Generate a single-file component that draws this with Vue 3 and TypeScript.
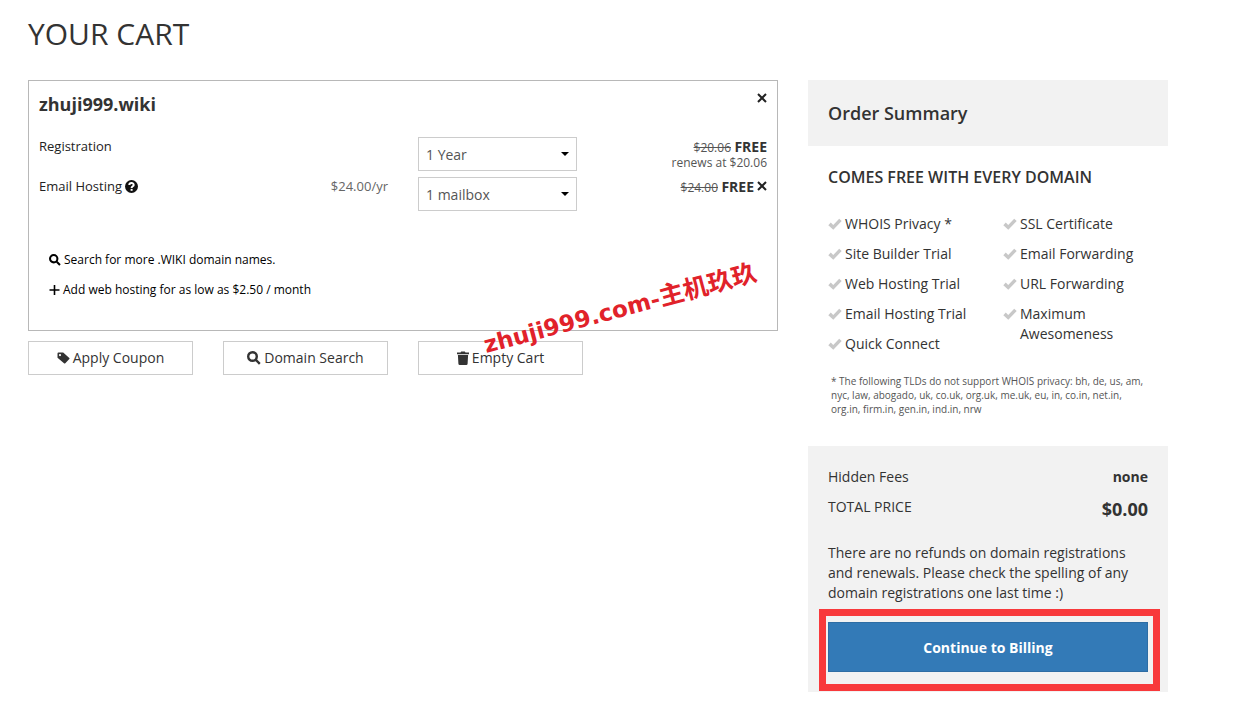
<script setup lang="ts">
import { ref } from 'vue'

const term = ref('1 Year')
const mailboxes = ref('1 mailbox')

const perks: string[][] = [
  ['WHOIS Privacy *', 'Site Builder Trial', 'Web Hosting Trial', 'Email Hosting Trial', 'Quick Connect'],
  ['SSL Certificate', 'Email Forwarding', 'URL Forwarding', 'Maximum Awesomeness'],
]
</script>

<template>
  <main class="page">
    <h1 class="title">YOUR CART</h1>
    <div class="columns">
      <section class="cart">
        <article class="card">
          <header class="card-head">
            <h2 class="domain">zhuji999.wiki</h2>
            <button class="remove" type="button" aria-label="Remove domain">
              <svg class="cross" viewBox="0 0 10 10"><path d="M1 1L9 9M9 1L1 9" /></svg>
            </button>
          </header>

          <div class="row">
            <label class="name" for="term">Registration</label>
            <span class="select-wrap">
              <select id="term" v-model="term" class="select">
                <option>1 Year</option>
                <option>2 Years</option>
              </select>
              <svg class="caret" viewBox="0 0 8 4"><path d="M0 0H8L4 4Z" /></svg>
            </span>
            <div class="price">
              <div><s>$20.06</s> <strong>FREE</strong></div>
              <div class="renew">renews at $20.06</div>
            </div>
          </div>

          <div class="row">
            <div class="name-line">
              <label class="name" for="mailboxes">Email Hosting
                <svg class="help" viewBox="0 0 13 13">
                  <circle cx="6.500" cy="6.500" r="6.500" />
                  <path class="hook" d="M4.300 5.100C4.300 2.500 8.700 2.400 8.700 4.900C8.700 6.300 6.600 6.200 6.600 7.900" />
                  <rect x="5.600" y="8.900" width="2" height="1.900" />
                </svg>
              </label>
              <span class="rate">$24.00/yr</span>
            </div>
            <span class="select-wrap">
              <select id="mailboxes" v-model="mailboxes" class="select">
                <option>1 mailbox</option>
                <option>2 mailboxes</option>
              </select>
              <svg class="caret" viewBox="0 0 8 4"><path d="M0 0H8L4 4Z" /></svg>
            </span>
            <div class="price inline">
              <span><s>$24.00</s> <strong>FREE</strong></span>
              <button class="remove" type="button" aria-label="Remove email hosting">
                <svg class="cross" viewBox="0 0 10 10"><path d="M1 1L9 9M9 1L1 9" /></svg>
              </button>
            </div>
          </div>

          <nav class="extras">
            <a class="extra" href="#search">
              <svg class="icon-sm" viewBox="0 0 14 14"><circle class="lens" cx="5.500" cy="5.500" r="4.300" /><path class="lens" d="M9 9L12.800 12.800" /></svg>
              Search for more .WIKI domain names.
            </a>
            <a class="extra" href="#hosting">
              <svg class="icon-plus" viewBox="0 0 10 10"><path d="M5 0V10M0 5H10" /></svg>
              Add web hosting for as low as $2.50 / month
            </a>
          </nav>
          <div class="stamp" aria-hidden="true">zhuji999.com-<span class="stamp-cjk">主机玖玖</span></div>
        </article>

        <div class="actions">
          <button class="action" type="button">
            <svg class="icon-tag" viewBox="0 0 13 12"><path fill-rule="evenodd" d="M0.500 1.500Q0.500 0.500 1.500 0.500H6.200L12.300 5.900Q12.900 6.500 12.300 7.100L8.300 11.300Q7.600 11.900 7 11.300L0.500 5.800ZM3 2A1.100 1.100 0 1 0 3 4.200A1.100 1.100 0 1 0 3 2Z" /></svg>
            Apply Coupon
          </button>
          <button class="action" type="button">
            <svg class="icon-md" viewBox="0 0 14 14"><circle class="lens" cx="5.500" cy="5.500" r="4.300" /><path class="lens" d="M9 9L12.800 12.800" /></svg>
            Domain Search
          </button>
          <button class="action" type="button">
            <svg class="icon-trash" viewBox="0 0 12 14"><path d="M0 1.500H3.500L4.200 0.500H7.800L8.500 1.500H12V3.200H0ZM0.900 4H11.100L10.600 12.800Q10.500 14 9.300 14H2.700Q1.500 14 1.400 12.800Z" /></svg>
            Empty Cart
          </button>
        </div>
      </section>

      <aside class="summary">
        <h2 class="summary-title">Order Summary</h2>
        <section class="free">
          <h3 class="free-title">COMES FREE WITH EVERY DOMAIN</h3>
          <div class="perks">
            <ul v-for="(column, i) in perks" :key="i" class="perk-list">
              <li v-for="perk in column" :key="perk" class="perk">
                <svg class="check" viewBox="0 0 14 12"><path d="M0.300 7.200L2.800 4.600L5.200 7L11.200 0.700L13.700 3.100L5.300 11.700Z" /></svg>
                <span>{{ perk }}</span>
              </li>
            </ul>
          </div>
          <p class="note">* The following TLDs do not support WHOIS privacy: bh, de, us, am, nyc, law, abogado, uk, co.uk, org.uk, me.uk, eu, in, co.in, net.in, org.in, firm.in, gen.in, ind.in, nrw</p>
        </section>
        <section class="totals">
          <div class="total"><span>Hidden Fees</span><strong>none</strong></div>
          <div class="total"><span>TOTAL PRICE</span><strong class="amount">$0.00</strong></div>
          <p class="refunds">There are no refunds on domain registrations and renewals. Please check the spelling of any domain registrations one last time :)</p>
          <div class="billing">
            <button class="continue" type="button">Continue to Billing</button>
          </div>
        </section>
      </aside>
    </div>
  </main>
</template>

<style>
body {
  background: #fff;
}
</style>

<style scoped>
* {
  box-sizing: border-box;
}
.page {
  max-width: 1196px;
  padding: 17px 28px 0;
  font: 14px/20px "Open Sans", "Noto Sans CJK SC", sans-serif;
  color: #333;
}
h1, h2, h3, p, ul {
  margin: 0;
  padding: 0;
}
button {
  font: inherit;
  cursor: pointer;
}
.title {
  font-size: 30px;
  line-height: 33px;
  font-weight: 400;
}
.columns {
  display: grid;
  grid-template-columns: 75fr 36fr;
  gap: 30px;
  align-items: start;
  margin-top: 30px;
}
.card {
  position: relative;
  border: 1px solid #b8b8b8;
  padding: 10px 10px 30px;
}
.card-head {
  display: flex;
  justify-content: space-between;
  align-items: flex-start;
  margin-bottom: 20px;
}
.domain {
  font-size: 18px;
  line-height: 26px;
  font-weight: 700;
}
.remove {
  display: flex;
  padding: 2px 0;
  border: 0;
  background: none;
}
.cross {
  width: 10px;
  height: 10px;
  fill: none;
  stroke: #222;
  stroke-width: 2;
}
.row {
  display: grid;
  grid-template-columns: 349fr 159fr 160fr;
  column-gap: 30px;
  height: 34px;
  margin-bottom: 6px;
  font-size: 13px;
  line-height: 18px;
}
.name {
  color: #222;
}
.name-line {
  display: flex;
  justify-content: space-between;
}
.help {
  width: 13px;
  height: 13px;
  vertical-align: -2px;
  fill: #111;
}
.help .hook {
  fill: none;
  stroke: #fff;
  stroke-width: 2;
}
.help rect {
  fill: #fff;
}
.rate {
  color: #666;
}
.select-wrap {
  position: relative;
}
.select {
  appearance: none;
  display: block;
  width: 100%;
  height: 34px;
  padding: 2px 24px 0 7px;
  border: 1px solid #ccc;
  border-radius: 0;
  background: #fff;
  color: #555;
  font: inherit;
  font-size: 14px;
}
.caret {
  position: absolute;
  right: 8px;
  top: 15px;
  width: 8px;
  height: 4px;
  fill: #000;
  pointer-events: none;
}
.price {
  text-align: right;
  line-height: 16px;
  padding-top: 2px;
}
.price s, .renew {
  font-size: 12px;
  color: #555;
}
.price s {
  line-height: 12px;
}
.price strong {
  font-size: 14px;
}
.inline {
  display: flex;
  justify-content: flex-end;
  align-items: flex-start;
  gap: 3px;
}
.extras {
  display: flex;
  flex-direction: column;
  align-items: flex-start;
  gap: 10px;
  margin-top: 39px;
  padding-left: 10px;
}
.extra {
  display: flex;
  align-items: center;
  gap: 3px;
  font-size: 12px;
  color: #000;
  text-decoration: none;
}
.icon-sm {
  width: 12px;
  height: 12px;
}
.lens {
  fill: none;
  stroke: currentColor;
  stroke-width: 2.4;
}
.icon-plus {
  width: 11px;
  height: 10px;
  stroke: currentColor;
  stroke-width: 1.6;
}
.stamp {
  position: absolute;
  left: 450px;
  top: 210px;
  z-index: 1;
  white-space: nowrap;
  font: 700 23px/30px "DejaVu Sans", sans-serif;
  color: #e1222a;
  transform: rotate(-15deg);
  pointer-events: none;
}
.stamp-cjk {
  font-family: "Noto Sans CJK SC", sans-serif;
  font-size: 25px;
}
.actions {
  display: grid;
  grid-template-columns: repeat(4, 1fr);
  gap: 30px;
  margin-top: 10px;
}
.action {
  display: flex;
  align-items: center;
  justify-content: center;
  gap: 3px;
  height: 34px;
  padding: 0;
  border: 1px solid #ccc;
  background: #fff;
  color: #333;
  white-space: nowrap;
}
.icon-tag {
  width: 13px;
  height: 12px;
  fill: currentColor;
}
.icon-md {
  width: 14px;
  height: 14px;
}
.icon-trash {
  width: 12px;
  height: 14px;
  fill: currentColor;
}
.summary-title {
  padding: 20px;
  background: #f2f2f2;
  font-size: 18px;
  line-height: 26px;
  font-weight: 600;
}
.free {
  padding: 21px 20px 30px;
}
.free-title {
  font-size: 16px;
  line-height: 20px;
  font-weight: 600;
}
.perks {
  display: grid;
  grid-template-columns: 1fr 1fr;
  gap: 30px;
  margin-top: 27px;
}
.perk-list {
  display: flex;
  flex-direction: column;
  gap: 10px;
  list-style: none;
}
.perk {
  display: flex;
  gap: 3px;
}
.check {
  flex: none;
  width: 14px;
  height: 12px;
  margin-top: 4px;
  fill: #c8c8c8;
}
.note {
  margin-top: 20px;
  padding-left: 3px;
  font-size: 10px;
  line-height: 14px;
  color: #555;
}
.totals {
  padding: 21px 20px 20px;
  background: #f2f2f2;
}
.total {
  display: flex;
  justify-content: space-between;
  margin-bottom: 10px;
}
.amount {
  font-size: 18px;
  line-height: 24px;
}
.refunds {
  margin-top: 22px;
}
.billing {
  position: relative;
  margin-top: 19px;
}
.billing::after {
  content: "";
  position: absolute;
  inset: -13px -12px -19px -9px;
  border: 7px solid #f8393b;
  pointer-events: none;
}
.continue {
  width: 100%;
  height: 50px;
  padding: 2px 0 0;
  border: 1px solid #2e6da4;
  background: #337ab7;
  color: #fff;
  font-weight: 700;
}
</style>
